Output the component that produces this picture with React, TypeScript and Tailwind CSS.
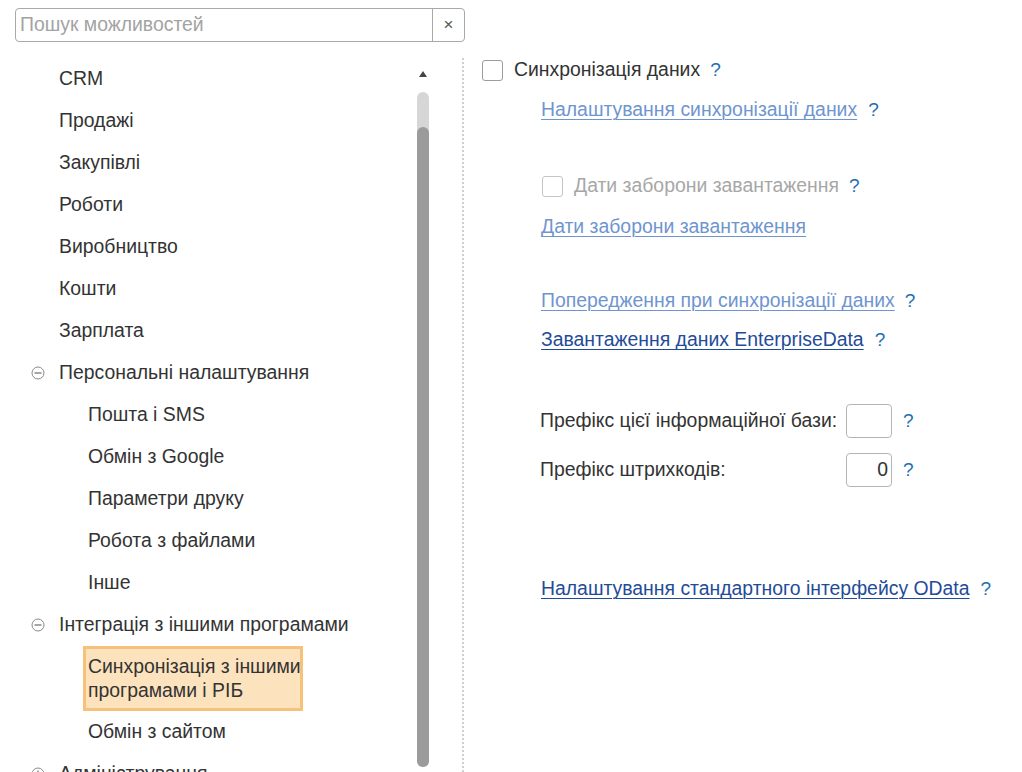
import React from "react";

const FONT = { fontFamily: '"Liberation Sans", Arial, sans-serif' };

type Item = { label: string; level: 0 | 1; group?: "minus" | "plus"; selected?: boolean };

const items: Item[] = [
  { label: "CRM", level: 0 },
  { label: "Продажі", level: 0 },
  { label: "Закупівлі", level: 0 },
  { label: "Роботи", level: 0 },
  { label: "Виробництво", level: 0 },
  { label: "Кошти", level: 0 },
  { label: "Зарплата", level: 0 },
  { label: "Персональні налаштування", level: 0, group: "minus" },
  { label: "Пошта і SMS", level: 1 },
  { label: "Обмін з Google", level: 1 },
  { label: "Параметри друку", level: 1 },
  { label: "Робота з файлами", level: 1 },
  { label: "Інше", level: 1 },
  { label: "Інтеграція з іншими програмами", level: 0, group: "minus" },
  { label: "Синхронізація з іншими програмами і РІБ", level: 1, selected: true },
  { label: "Обмін з сайтом", level: 1 },
  { label: "Адміністрування", level: 0, group: "plus" },
];

function GroupIcon({ plus }: { plus?: boolean }) {
  return (
    <svg width="14" height="14" viewBox="0 0 14 14" className="shrink-0">
      <circle cx="7" cy="7" r="6" fill="none" stroke="#8a8a8a" strokeWidth="1" />
      <line x1="3.5" y1="7" x2="10.5" y2="7" stroke="#6a6a6a" strokeWidth="1.2" />
      {plus && <line x1="7" y1="3.5" x2="7" y2="10.5" stroke="#6a6a6a" strokeWidth="1.2" />}
    </svg>
  );
}

function Help() {
  return <span className="text-[19px] text-[#1d6fb3] leading-none">?</span>;
}

function Checkbox({ disabled }: { disabled?: boolean }) {
  return (
    <span
      className={
        "inline-block w-[21px] h-[21px] rounded-[3px] border bg-white shrink-0 " +
        (disabled ? "border-[#c4c4c4]" : "border-[#9c9c9c]")
      }
    />
  );
}

function Link({ text, muted }: { text: string; muted?: boolean }) {
  return (
    <span
      className={
        "underline underline-offset-[3px] decoration-1 whitespace-nowrap " +
        (muted ? "text-[#6f95cf]" : "text-[#1f4c99]")
      }
    >
      {text}
    </span>
  );
}

export default function App() {
  return (
    <div className="w-[1022px] h-[772px] bg-white overflow-hidden text-[19.4px] text-[#333]" style={FONT}>
      {/* Search */}
      <div className="pt-[8px] pl-[15px]">
        <div className="flex w-[450px] h-[34px] border border-[#a9a9a9] rounded-[4px] overflow-hidden">
          <div className="flex-1 flex items-center pl-[4px] text-[#a3a3a3]">Пошук можливостей</div>
          <div className="w-[32px] border-l border-[#a9a9a9] flex items-center justify-center text-[#555] text-[17px]">
            ×
          </div>
        </div>
      </div>

      <div className="flex mt-[16px] h-[714px]">
        {/* Left tree */}
        <div className="flex w-[462px] h-full">
          <div className="flex-1 overflow-hidden whitespace-nowrap">
            {items.map((it) =>
              it.selected ? (
                <div key={it.label} className="flex h-[65px] pl-[83px]">
                  <div className="w-[220px] h-[65px] bg-[#fde3bd] border-[3px] border-[#f6c27a] pl-[2px] pt-[5px] leading-[24px] text-[#333]">
                    Синхронізація з іншими
                    <br />
                    програмами і РІБ
                  </div>
                </div>
              ) : (
                <div key={it.label} className="flex items-center h-[42px]">
                  {it.level === 0 ? (
                    <>
                      <div className="w-[59px] flex justify-end pr-[14px]">
                        {it.group && <GroupIcon plus={it.group === "plus"} />}
                      </div>
                      <span>{it.label}</span>
                    </>
                  ) : (
                    <span className="pl-[88px]">{it.label}</span>
                  )}
                </div>
              )
            )}
          </div>
          {/* scrollbar */}
          <div className="w-[12px] mr-[33px] flex flex-col items-center">
            <div className="mt-[13px] w-0 h-0 border-l-[4px] border-r-[4px] border-b-[6px] border-l-transparent border-r-transparent border-b-[#444]" />
            <div className="mt-[15px] w-[12px] flex-1 mb-[5px] rounded-full bg-[#d6d6d6] flex flex-col">
              <div className="mt-[35px] flex-1 rounded-full bg-[#9b9b9b]" />
            </div>
          </div>
        </div>

        {/* Separator */}
        <div className="w-0 h-full border-l-2 border-dotted border-[#cfcfcf]" />

        {/* Right panel */}
        <div className="flex-1 pl-[18px] flex flex-col whitespace-nowrap">
          <div className="flex items-center h-[24px]">
            <Checkbox />
            <span className="ml-[11px]">Синхронізація даних</span>
            <span className="ml-[10px]">
              <Help />
            </span>
          </div>
          <div className="flex items-center h-[24px] mt-[16px] pl-[59px]">
            <Link text="Налаштування синхронізації даних" muted />
            <span className="ml-[11px]">
              <Help />
            </span>
          </div>
          <div className="flex items-center h-[24px] mt-[52px] pl-[60px]">
            <Checkbox disabled />
            <span className="ml-[11px] text-[#a7a7a7]">Дати заборони завантаження</span>
            <span className="ml-[10px]">
              <Help />
            </span>
          </div>
          <div className="flex items-center h-[24px] mt-[17px] pl-[59px]">
            <Link text="Дати заборони завантаження" muted />
          </div>
          <div className="flex items-center h-[24px] mt-[50px] pl-[59px]">
            <Link text="Попередження при синхронізації даних" muted />
            <span className="ml-[10px]">
              <Help />
            </span>
          </div>
          <div className="flex items-center h-[24px] mt-[15px] pl-[59px]">
            <Link text="Завантаження даних EnterpriseData" />
            <span className="ml-[11px]">
              <Help />
            </span>
          </div>
          <div className="flex items-center h-[34px] mt-[52px] pl-[58px]">
            <span className="w-[306px]">Префікс цієї інформаційної бази:</span>
            <div className="w-[46px] h-[34px] border border-[#b5b5b5] rounded-[4px]" />
            <span className="ml-[11px]">
              <Help />
            </span>
          </div>
          <div className="flex items-center h-[34px] mt-[15px] pl-[58px]">
            <span className="w-[306px]">Префікс штрихкодів:</span>
            <div className="w-[46px] h-[34px] border border-[#b5b5b5] rounded-[4px] flex items-center justify-end pr-[3px]">
              0
            </div>
            <span className="ml-[11px]">
              <Help />
            </span>
          </div>
          <div className="flex items-center h-[24px] mt-[90px] pl-[59px]">
            <Link text="Налаштування стандартного інтерфейсу OData" />
            <span className="ml-[11px]">
              <Help />
            </span>
          </div>
        </div>
      </div>
    </div>
  );
}
